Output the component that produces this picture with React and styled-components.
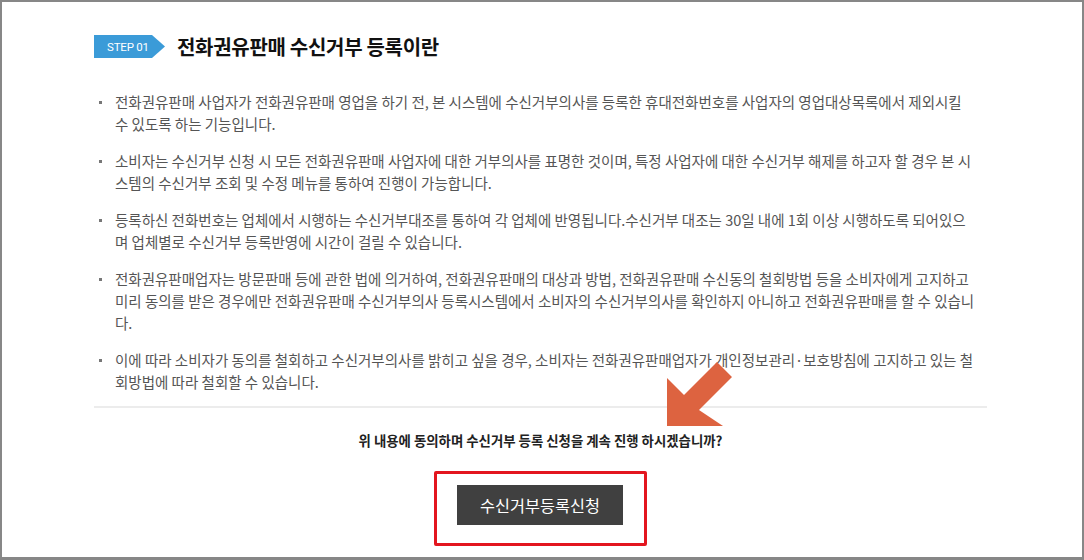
import React from 'react';
import styled, { createGlobalStyle } from 'styled-components';

const GlobalStyle = createGlobalStyle`
  html, body {
    margin: 0;
    padding: 0;
    background: #ffffff;
  }
  body {
    font-family: "Noto Sans CJK KR", "Noto Sans", sans-serif;
  }
`;

const Frame = styled.div`
  position: relative;
  box-sizing: border-box;
  width: 1084px;
  height: 560px;
  border: 2px solid #878787;
  border-bottom-width: 3px;
  background: #fff;
  padding: 33px 95px 0 92px;
  overflow: hidden;
`;

const StepHeader = styled.div`
  display: flex;
  align-items: center;
  gap: 12px;
  height: 23px;
`;

const StepBadge = styled.div`
  display: flex;
  align-items: center;
  box-sizing: border-box;
  width: 71px;
  height: 23px;
  padding-left: 13px;
  background: #3b9bd8;
  clip-path: polygon(0 0, 58px 0, 71px 50%, 58px 100%, 0 100%);
  color: #fff;
  font-family: "Liberation Sans Narrow", "Roboto", sans-serif;
  font-size: 11.5px;
  letter-spacing: -0.2px;
`;

const Title = styled.h2`
  margin: 0;
  font-size: 20px;
  font-weight: 700;
  color: #111;
  letter-spacing: -0.3px;
`;

const List = styled.ul`
  list-style: none;
  margin: 33px 0 0;
  padding: 0;
`;

const Item = styled.li`
  position: relative;
  padding-left: 21px;
  font-size: 14.5px;
  line-height: 22px;
  color: #555;
  & + & {
    margin-top: 15px;
  }
  &::before {
    content: '';
    position: absolute;
    left: 5px;
    top: 10px;
    width: 3px;
    height: 3px;
    background: #777;
  }
`;

const Divider = styled.hr`
  margin: 13px 0 0;
  border: 0;
  height: 2px;
  background: #ececec;
`;

const Question = styled.p`
  margin: 23px 0 0;
  text-align: center;
  font-size: 13.4px;
  font-weight: 700;
  line-height: 18px;
  color: #222;
`;

const Actions = styled.div`
  display: flex;
  justify-content: center;
  margin-top: 22px;
`;

const Highlight = styled.div`
  box-sizing: border-box;
  width: 213px;
  height: 75px;
  padding: 11px 0 0 20px;
  border: 3px solid #e3161f;
  border-radius: 2px;
`;

const SubmitButton = styled.button`
  width: 166px;
  height: 40px;
  border: 0;
  background: #404040;
  color: #fff;
  font-family: "Noto Sans CJK KR", sans-serif;
  font-size: 16.3px;
  cursor: pointer;
`;

const Pointer = styled.svg`
  position: absolute;
  left: 658px;
  top: 348px;
`;

const items = [
  ['전화권유판매 사업자가 전화권유판매 영업을 하기 전, 본 시스템에 수신거부의사를 등록한 휴대전화번호를 사업자의 영업대상목록에서 제외시킬', '수 있도록 하는 기능입니다.'],
  ['소비자는 수신거부 신청 시 모든 전화권유판매 사업자에 대한 거부의사를 표명한 것이며, 특정 사업자에 대한 수신거부 해제를 하고자 할 경우 본 시', '스템의 수신거부 조회 및 수정 메뉴를 통하여 진행이 가능합니다.'],
  ['등록하신 전화번호는 업체에서 시행하는 수신거부대조를 통하여 각 업체에 반영됩니다.수신거부 대조는 30일 내에 1회 이상 시행하도록 되어있으', '며 업체별로 수신거부 등록반영에 시간이 걸릴 수 있습니다.'],
  ['전화권유판매업자는 방문판매 등에 관한 법에 의거하여, 전화권유판매의 대상과 방법, 전화권유판매 수신동의 철회방법 등을 소비자에게 고지하고', '미리 동의를 받은 경우에만 전화권유판매 수신거부의사 등록시스템에서 소비자의 수신거부의사를 확인하지 아니하고 전화권유판매를 할 수 있습니', '다.'],
  ['이에 따라 소비자가 동의를 철회하고 수신거부의사를 밝히고 싶을 경우, 소비자는 전화권유판매업자가 개인정보관리·보호방침에 고지하고 있는 철', '회방법에 따라 철회할 수 있습니다.'],
];

const App = () => {
  return (
    <>
      <GlobalStyle />
      <Frame>
        <StepHeader>
          <StepBadge>STEP 01</StepBadge>
          <Title>전화권유판매 수신거부 등록이란</Title>
        </StepHeader>

        <List>
          {items.map((lines, i) => (
            <Item key={i}>
              {lines.map((line, j) => (
                <React.Fragment key={j}>
                  {j > 0 && <br />}
                  {line}
                </React.Fragment>
              ))}
            </Item>
          ))}
        </List>

        <Divider />

        <Question>위 내용에 동의하며 수신거부 등록 신청을 계속 진행 하시겠습니까?</Question>

        <Actions>
          <Highlight>
            <SubmitButton type="button">수신거부등록신청</SubmitButton>
          </Highlight>
        </Actions>

        <Pointer width="80" height="80" viewBox="0 0 80 80">
          <polygon
            points="7,76 7,28 24,45 57,12 72,27 39,60 63,76"
            fill="#dd6340"
          />
        </Pointer>
      </Frame>
    </>
  );
};

export default App;
